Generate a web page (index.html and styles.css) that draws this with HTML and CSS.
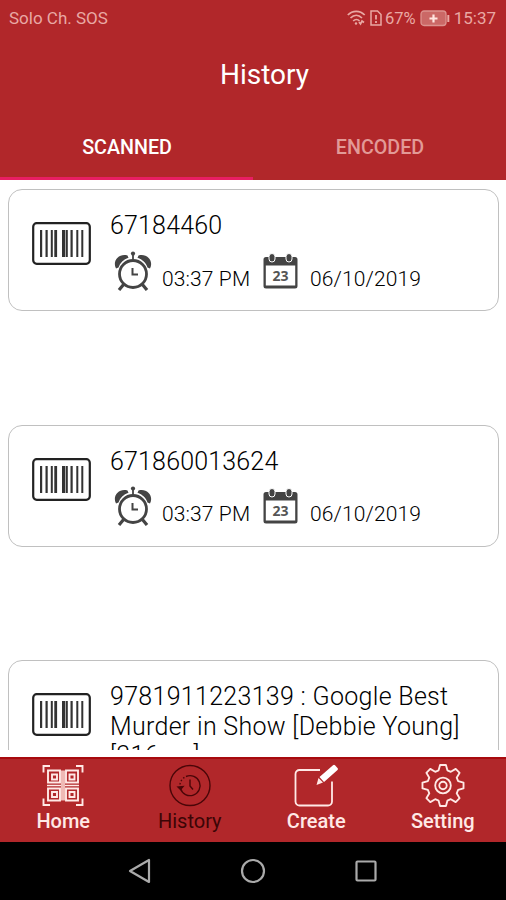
FILE: index.html
```html
<!DOCTYPE html>
<html lang="en">
<head>
	<meta charset="utf-8">
	<meta name="viewport" content="width=device-width, initial-scale=1.0">
	<title>History</title>
	<link rel="stylesheet" href="styles.css">
</head>
<body>

	<!-- shared icons -->
	<svg class="defs" width="0" height="0">
		<symbol id="barcode" viewBox="0 0 59 43">
			<rect x="1.2" y="1.2" width="56.6" height="40.6" rx="3.5" fill="none" stroke="#222" stroke-width="2.2"/>
			<path fill="#333" d="M8 8h2.200v27H8zM13.500 8h2.200v27h-2.200zM18.800 8h2v27h-2zM22.300 8h2.800v27h-2.800zM30 8h3v27h-3zM33.600 8h2.200v27h-2.200zM38.500 8h2.200v27h-2.200zM44.300 8h2v27h-2zM49.300 8h2v27h-2z"/>
		</symbol>
		<symbol id="alarm" viewBox="0 0 38 40">
			<g fill="none" stroke="#444" stroke-width="2.800">
				<circle cx="19" cy="23" r="13.500"/>
				<path d="M10 33l-5 6M28 33l5 6" stroke-width="3.200"/>
				<path d="M19 3v7" stroke-width="1.800"/>
				<path d="M18.500 17v6.500H24" stroke-width="2"/>
			</g>
			<g fill="#444">
				<circle cx="19" cy="2.500" r="2.100"/>
				<path d="M2 17.500C-2 10 5 2 13.500 4.500l1 2.300C9.500 8.500 6 12 4.500 16.500zM36 17.500C40 10 33 2 24.500 4.500l-1 2.300C28.500 8.500 32 12 33.500 16.500z"/>
			</g>
		</symbol>
		<symbol id="calendar" viewBox="0 0 35 36">
			<path fill="#444" d="M3 4h29a2.500 2.500 0 0 1 2.500 2.500V33a2.500 2.500 0 0 1-2.500 2.500H3A2.500 2.500 0 0 1 .5 33V6.500A2.500 2.500 0 0 1 3 4z"/>
			<path fill="#fff" d="M2.800 12.500h29.400v20H2.800z"/>
			<g fill="#444" stroke="#fff" stroke-width="1">
				<rect x="6" y=".5" width="6" height="8.500" rx="3"/>
				<rect x="23" y=".5" width="6" height="8.500" rx="3"/>
			</g>
			<text x="17.500" y="28" text-anchor="middle" fill="#555" font-size="14" font-weight="700" font-family="Open Sans, sans-serif">23</text>
		</symbol>
	</svg>

	<header class="top">
		<div class="status">
			<span class="carrier">Solo Ch. SOS</span>
			<svg class="wifi" width="19" height="16" viewBox="0 0 19 16" fill="none" stroke="#e9a9a4" stroke-width="1.700">
				<path d="M.8 5C5.500 .2 13 .2 17.700 5M3.500 8C7 4.500 11.500 4.500 15 8M6.200 11c2-2 4.500-2 6.300 0"/>
				<circle cx="9" cy="13.500" r="1.200" fill="#e9a9a4" stroke="none"/>
				<path d="M12 12l1.500 2 1.500-3 2 1.500"/>
			</svg>
			<svg class="sim" width="12" height="16" viewBox="0 0 12 16" fill="none" stroke="#e9a9a4" stroke-width="1.500">
				<path d="M1 1h6.500L11 4.500V15H1z"/>
				<path d="M6 5v4.500M6 11v2" stroke-width="1.800"/>
			</svg>
			<span class="percent">67%</span>
			<svg class="battery" width="30" height="17" viewBox="0 0 30 17">
				<rect x="1" y="1" width="25" height="14.500" rx="3" fill="#cb6866" stroke="#dc928e" stroke-width="1.300"/>
				<path d="M13.500 4.500v8M9.500 8.500h8" stroke="#ffe5e0" stroke-width="2.200"/>
				<path d="M28.300 5v7" stroke="#e9a9a4" stroke-width="2"/>
			</svg>
			<span class="clock">15:37</span>
		</div>
		<h1>History</h1>
		<div class="tabs">
			<div class="tab active">SCANNED</div>
			<div class="tab">ENCODED</div>
		</div>
	</header>

	<main class="list">
		<div class="card">
			<svg class="barcode"><use href="#barcode"/></svg>
			<div class="info">
				<p class="code">67184460</p>
				<div class="when">
					<svg class="alarm"><use href="#alarm"/></svg>
					<span class="time">03:37 PM</span>
					<svg class="calendar"><use href="#calendar"/></svg>
					<span class="date">06/10/2019</span>
				</div>
			</div>
		</div>
		<div class="card">
			<svg class="barcode"><use href="#barcode"/></svg>
			<div class="info">
				<p class="code">671860013624</p>
				<div class="when">
					<svg class="alarm"><use href="#alarm"/></svg>
					<span class="time">03:37 PM</span>
					<svg class="calendar"><use href="#calendar"/></svg>
					<span class="date">06/10/2019</span>
				</div>
			</div>
		</div>
		<div class="card">
			<svg class="barcode"><use href="#barcode"/></svg>
			<div class="info">
				<p class="code long">9781911223139 : Google Best<br>Murder in Show [Debbie Young]<br>[316 pp]</p>
			</div>
		</div>
	</main>

	<nav class="menu">
		<a class="item">
			<svg width="42" height="42" viewBox="0 0 42 42" fill="none" stroke="#ffe9e6" stroke-width="1.900">
				<path d="M1.500 8V1.500H8M34 1.500h6.500V8M40.500 34v6.500H34M8 40.500H1.500V34"/>
				<path d="M6 6h12v12H6zM24 6h12v12H24zM6 24h12v12H6zM24 24h12v12H24z"/>
				<path d="M10 10h5v5h-5zM27.500 10h5v5h-5zM10 27.500h5v5h-5zM27.500 27.500h5v5h-5z"/>
				<path d="M5 21h32" stroke-width="1.500"/>
				<path d="M21 6v30" stroke-width="4" stroke="#efb9b5"/>
			</svg>
			<span>Home</span>
		</a>
		<a class="item current">
			<svg width="42" height="42" viewBox="0 0 42 42" fill="none" stroke="#4a0608" stroke-width="1.400">
				<circle cx="21" cy="21" r="20"/>
				<path d="M11.500 24A10 10 0 1 0 17 12"/>
				<path d="M11 20a10 10 0 0 1 6-8" stroke-dasharray="1.500 2"/>
				<path d="M9 22.500l2.500 2.500 2.500-3z" fill="#4a0608"/>
				<path d="M21 15v6.500l3 3.500"/>
			</svg>
			<span>History</span>
		</a>
		<a class="item">
			<svg width="44" height="42" viewBox="0 0 44 42" fill="none" stroke="#ffe9e6" stroke-width="1.800">
				<path d="M26 5.500H5.500a4 4 0 0 0-4 4V37a4 4 0 0 0 4 4H34a4 4 0 0 0 4-4V17"/>
				<path d="M22.500 20.500l2-7L29 18z" fill="#ffe9e6" stroke="none"/>
				<path d="M25.500 12.500L39 .8a1.500 1.500 0 0 1 2 0l2.500 2.700a1.500 1.500 0 0 1 0 2L30 17.500z" fill="#fff" stroke="none"/>
			</svg>
			<span>Create</span>
		</a>
		<a class="item">
			<svg width="44" height="44" viewBox="-22 -22 44 44" fill="none" stroke="#ffe9e6" stroke-width="1.900" stroke-linejoin="round">
				<path d="M-3-21H3L4.500-15.500 8-14 13-17 17-13 14-8 15.500-4.500 21-3V3L15.500 4.500 14 8 17 13 13 17 8 14 4.500 15.500 3 21H-3L-4.500 15.500-8 14-13 17-17 13-14 8-15.500 4.500-21 3V-3L-15.500-4.500-14-8-17-13-13-17-8-14-4.500-15.500z"/>
				<circle r="8"/>
				<circle r="3.800"/>
			</svg>
			<span>Setting</span>
		</a>
	</nav>

	<footer class="softkeys">
		<svg width="24" height="26" viewBox="0 0 24 26" fill="none" stroke="#aaa" stroke-width="2.200" stroke-linejoin="round"><path d="M21 2v22L2 13z"/></svg>
		<svg width="26" height="26" viewBox="0 0 26 26" fill="none" stroke="#aaa" stroke-width="2.200"><circle cx="13" cy="13" r="11"/></svg>
		<svg width="24" height="24" viewBox="0 0 24 24" fill="none" stroke="#aaa" stroke-width="2.200"><rect x="2.500" y="2.500" width="19" height="19" rx="1"/></svg>
	</footer>

</body>
</html>
```
FILE: styles.css
```css
* {
	margin: 0;
	padding: 0;
	box-sizing: border-box;
}

body {
	display: flex;
	flex-direction: column;
	height: 900px;
	overflow: hidden;
	background: #fff;
	font-family: Roboto, sans-serif;
}

.defs {
	display: none;
}

/* header */
.top {
	height: 180px;
	flex: none;
	background: #b1272a;
}

.status {
	display: flex;
	align-items: center;
	height: 36px;
	padding: 0 10px 0 9px;
	font-size: 17px;
	color: #e9a9a4;
}

.carrier {
	margin-right: auto;
}

.wifi {
	margin-right: 4px;
}

.percent {
	margin: 0 4px 0 3px;
	font-size: 16.500px;
}

.clock {
	margin-left: 4px;
}

h1 {
	height: 78px;
	padding-left: 23px;
	line-height: 78px;
	font-size: 28px;
	font-weight: 400;
	text-align: center;
	color: #fff;
}

.tabs {
	display: flex;
	height: 66px;
}

.tab {
	flex: 1;
	line-height: 67px;
	padding-left: 1px;
	font-size: 19.700px;
	font-weight: 500;
	text-align: center;
	color: #e29a97;
	border-bottom: 3px solid transparent;
}

.tab.active {
	color: #fff;
	border-bottom-color: #e81e63;
}

/* history list */
.list {
	height: 569.500px;
	flex: none;
	padding: 9px 7px 0 8px;
	overflow: hidden;
}

.card {
	display: flex;
	height: 122px;
	margin-bottom: 113.500px;
	padding: 21px 20px 0 23px;
	border: 1.500px solid #c0c0c0;
	border-radius: 14px;
}

.card:last-child {
	height: 160px;
}

.barcode {
	width: 59px;
	height: 43px;
	flex: none;
	margin-top: 11px;
	margin-right: 19px;
}

.code {
	font-size: 25px;
	font-weight: 300;
	line-height: 29.500px;
	letter-spacing: 0.170px;
	white-space: nowrap;
	color: #000;
}

.code.long {
	letter-spacing: 0.300px;
}

.when {
	display: flex;
	align-items: flex-start;
	margin-top: 10px;
	font-size: 21px;
	font-weight: 300;
	line-height: 25px;
	letter-spacing: 0.120px;
	white-space: nowrap;
	color: #000;
}

.alarm {
	width: 38px;
	height: 40px;
	margin-left: 4px;
}

.time {
	width: 111px;
	padding: 16px 0 0 10px;
}

.calendar {
	width: 35px;
	height: 36px;
	margin-top: 2px;
}

.date {
	padding: 16px 0 0 12px;
}

/* bottom menu */
.menu {
	display: flex;
	height: 85px;
	flex: none;
	margin-top: 7px;
	background: #b1272a;
	border-top: 2px solid #a80a0e;
}

.item {
	display: flex;
	flex: 1;
	flex-direction: column;
	align-items: center;
	padding-top: 5px;
	font-size: 20px;
	font-weight: 500;
	color: #ffe9e6;
}

.item svg {
	height: 43px;
}

.item span {
	line-height: 28px;
}

.item.current {
	font-weight: 400;
	color: #3c0506;
}

.softkeys {
	display: flex;
	align-items: center;
	justify-content: center;
	gap: 88px;
	flex: 1;
	background: #000;
}
```
